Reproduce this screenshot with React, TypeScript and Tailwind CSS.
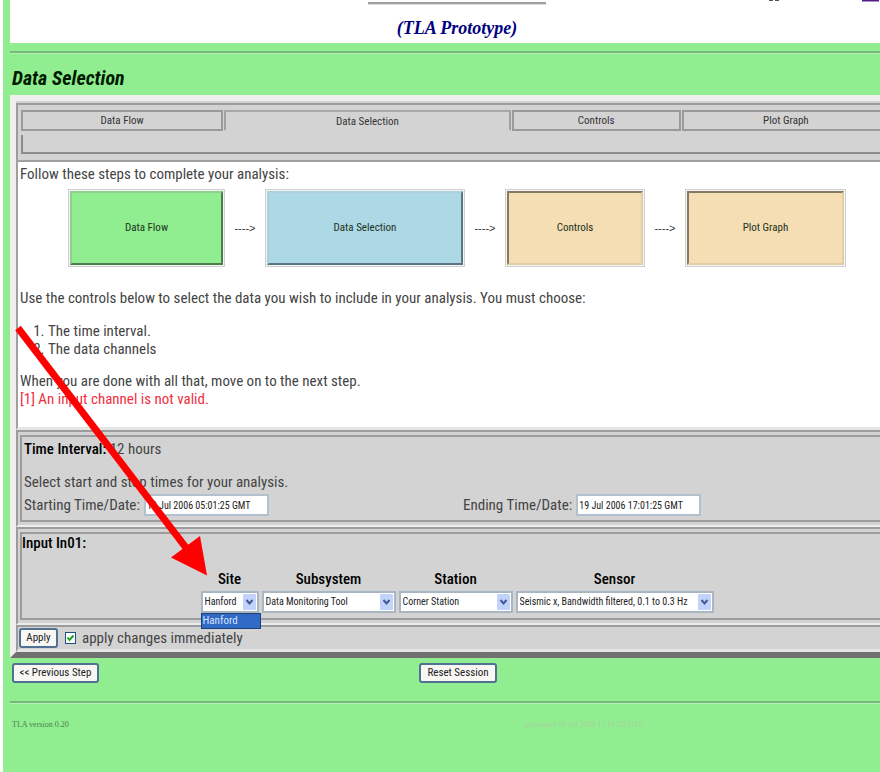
import React from "react";

const condensed = "font-['Roboto_Condensed',Roboto,sans-serif] whitespace-nowrap leading-[14px]";
const small = `${condensed} text-[11px]`;
const field = `${condensed} text-[10px]`;

const steps = [
  { name: "Data Flow", box: "w-[157px]", tone: "bg-[#90ee90] border-[#90cf90] border-r-[#4d7d4d] border-b-[#4d7d4d]" },
  { name: "Data Selection", box: "w-[200px]", tone: "bg-[#add8e6] border-[#add0dc] border-r-[#5a7681] border-b-[#5a7681]" },
  { name: "Controls", box: "w-[140px]", tone: "bg-[#f5deb3] border-[#e2cda7] border-t-[#857a66] border-l-[#857a66]" },
  { name: "Plot Graph", box: "w-[161px]", tone: "bg-[#f5deb3] border-[#e2cda7] border-t-[#857a66] border-l-[#857a66]" },
];

const fields = [
  { label: "Site", value: "Hanford", width: "w-[58px]", open: true },
  { label: "Subsystem", value: "Data Monitoring Tool", width: "w-[134px]", open: false },
  { label: "Station", value: "Corner Station", width: "w-[114px]", open: false },
  { label: "Sensor", value: "Seismic x, Bandwidth filtered, 0.1 to 0.3 Hz", width: "w-[198px]", open: false },
];

function Rule() {
  return <hr className="h-[3px] border-0 border-t-2 border-b border-t-[#79b879] border-b-[#b5f0b5]" />;
}

function Tab({ name, active = false }: { name: string; active?: boolean }) {
  return (
    <button
      type="button"
      role="tab"
      aria-selected={active}
      className={`${small} mr-px h-[21px] border-2 text-[#333] ${
        active ? "border-t-[#a8a8a8] border-x-[#a0a0a0] border-b-transparent pt-[2px]" : "border-[#9a9a9a]"
      }`}
    >
      {name}
    </button>
  );
}

function Cell({ children, className = "" }: { children: React.ReactNode; className?: string }) {
  return (
    <div className="border-2 border-t-[#9c9c9c] border-l-[#9c9c9c] border-r-[#ececec] border-b-[#ececec] px-[2px] py-[3px]">
      <div className={`border-2 border-[#9c9c9c] ${className}`}>{children}</div>
    </div>
  );
}

function PushButton({ children, className = "" }: { children: React.ReactNode; className?: string }) {
  return (
    <button type="button" className={`${small} h-[20px] rounded-[3px] border-2 border-[#4f7292] bg-[#f8f7f4] text-[#222] ${className}`}>
      {children}
    </button>
  );
}

function TimeField({ id, label, value }: { id: string; label: string; value: string }) {
  return (
    <div className="flex items-center gap-1">
      <label htmlFor={id}>{label}</label>
      <input id={id} defaultValue={value} className={`${field} h-[22px] w-[125px] border-2 border-[#b3c1cf] bg-white px-px text-[#222]`} />
    </div>
  );
}

function Arrow() {
  return (
    <svg className="pointer-events-none absolute top-[320px] left-[7px]" width="205" height="262" viewBox="10 320 205 262" aria-hidden="true">
      <path d="M18 328L187 549" stroke="#ff0000" strokeWidth="7" />
      <path d="M200 536L171 557.5L207 575.5Z" fill="#ff0000" />
    </svg>
  );
}

export default function App() {
  return (
    <div className="relative min-h-screen overflow-hidden border-l-[3px] border-white bg-[#90ee90] pl-[7px] font-['Roboto_Condensed',Roboto,sans-serif] text-[15px] leading-[18px] text-[#444]">
      <div className="w-[calc(100%+24px)]">
        <header className="relative flex h-[43px] flex-col items-center overflow-hidden bg-white">
          <div className="mt-[2px] h-[3px] w-[178px] border-t-2 border-b border-t-[#a0a0a0] border-b-[#ddd]" />
          <h2 className="mt-[10px] font-['Liberation_Serif',serif] text-[18px] leading-[26px] font-bold text-[#000080] italic">(TLA Prototype)</h2>
          <svg className="absolute top-0 right-[25px]" width="110" height="3" aria-hidden="true">
            <path d="M0 0.5h4M6 0.5h4" stroke="#555" />
            <path d="M93 0.5h17" stroke="#551a8b" strokeWidth="2" />
          </svg>
        </header>

        <div className="pt-[8px]">
          <Rule />
        </div>
        <h1 className="h-[41px] pt-[12px] pl-[2px] text-[20px] leading-[24px] font-bold text-[#001a00] italic">Data Selection</h1>

        <main className="border-[6px] border-t-[#efefef] border-r-[#707070] border-b-[#707070] border-l-[#efefef] bg-[#d3d3d3] pt-[2px]">
          <div className="border-t-2 border-l-2 border-[#9c9c9c] pt-[5px] pr-[7px] pb-[6px] pl-[3px]">
            <div role="tablist" className="grid grid-cols-[203fr_287fr_170fr_209fr]">
              <Tab name="Data Flow" />
              <Tab name="Data Selection" active />
              <Tab name="Controls" />
              <Tab name="Plot Graph" />
            </div>
            <div className="mt-[4px] h-[19px] border-b-2 border-l-2 border-[#8c8c8c]" />
          </div>

          <section className="border-2 border-b-[3px] border-t-[#a0a0a0] border-r-[#e5e5e5] border-b-[#e5e5e5] border-l-[#a0a0a0] bg-white px-[2px] pt-[3px] pb-[19px]">
            <p>Follow these steps to complete your analysis:</p>
            <div className="mt-[6px] ml-[48px] flex items-center">
              {steps.map((s, i) => (
                <React.Fragment key={s.name}>
                  {i > 0 && (
                    <span className="w-[40px] text-center font-['Liberation_Sans',sans-serif] text-[11px] leading-[14px] text-[#333]">----&gt;</span>
                  )}
                  <div className={`${s.box} h-[78px] border border-[#cfcfcf] bg-[#f4f4f4] p-px`}>
                    <button type="button" className={`${small} ${s.tone} h-full w-full border-2 text-[#1c3320]`}>
                      {s.name}
                    </button>
                  </div>
                </React.Fragment>
              ))}
            </div>
            <p className="mt-[22px]">Use the controls below to select the data you wish to include in your analysis. You must choose:</p>
            <ol className="mt-[15px] mb-[14px] list-decimal pl-[28px]">
              <li>The time interval.</li>
              <li>The data channels</li>
            </ol>
            <p>When you are done with all that, move on to the next step.</p>
            <p className="text-[#f03040]">[1] An input channel is not valid.</p>
          </section>

          <Cell className="px-[2px] pt-[3px] pb-[4px]">
            <p>
              <span className="font-medium text-black">Time Interval:</span> 12 hours
            </p>
            <p className="mt-[15px]">Select start and stop times for your analysis.</p>
            <div className="mt-[3px] grid grid-cols-2">
              <TimeField id="start" label="Starting Time/Date:" value="19 Jul 2006 05:01:25 GMT" />
              <div className="pl-[6px]">
                <TimeField id="end" label="Ending Time/Date:" value="19 Jul 2006 17:01:25 GMT" />
              </div>
            </div>
          </Cell>

          <Cell className="pb-[5px]">
            <p className="font-medium text-black">Input In01:</p>
            <div className="mt-[18px] flex justify-center gap-[3px]">
              {fields.map((f) => (
                <div key={f.label} className={`${f.width} relative`}>
                  <label htmlFor={f.label} className="block text-center font-medium text-black">
                    {f.label}
                  </label>
                  <div className="relative mt-[3px]">
                    <select id={f.label} className={`${field} h-[22px] w-full appearance-none border-2 border-[#a9b5c0] bg-white pl-[2px] text-[#222]`}>
                      <option>{f.value}</option>
                    </select>
                    <svg className="pointer-events-none absolute top-[3px] right-[3px]" width="13" height="16" aria-hidden="true">
                      <rect width="13" height="16" rx="1" fill="#c2d3fb" />
                      <path d="M3.5 6L6.5 9.5L9.5 6" fill="none" stroke="#3f5a92" strokeWidth="2" />
                    </svg>
                  </div>
                  {f.open && (
                    <div role="listbox" className="absolute top-full left-0 z-10 w-[60px] border border-[#20407a] bg-[#316ac5] pl-px text-[#d5e4ff]">
                      <div role="option" aria-selected="true" className={small}>
                        Hanford
                      </div>
                    </div>
                  )}
                </div>
              ))}
            </div>
          </Cell>

          <div className="flex h-[27px] items-center border-t-2 border-b-[3px] border-l-2 border-t-[#9c9c9c] border-b-[#e5e5e5] border-l-[#9c9c9c] pl-px">
            <PushButton className="w-[39px]">Apply</PushButton>
            <input id="auto" type="checkbox" defaultChecked className="peer sr-only" />
            <label htmlFor="auto" className="ml-[7px] flex items-center gap-[6px]">
              <svg width="11" height="12" aria-hidden="true">
                <rect x="0.5" y="0.5" width="10" height="11" fill="#fff" stroke="#1c5180" />
                <path d="M2.5 5.5L4.5 8L8.5 3.5" fill="none" stroke="#21a121" strokeWidth="2" />
              </svg>
              apply changes immediately
            </label>
          </div>
        </main>

        <div className="grid grid-cols-[1fr_auto_1fr] pt-[5px] pl-[2px]">
          <PushButton className="w-[87px]">&lt;&lt; Previous Step</PushButton>
          <PushButton className="w-[78px]">Reset Session</PushButton>
        </div>
        <div className="pt-[18px]">
          <Rule />
        </div>
        <footer className="grid grid-cols-[513px_1fr] pt-[15px] pl-[2px] font-['Liberation_Serif',serif] text-[8px] leading-[12px]">
          <span className="text-[#4d7d4d]">TLA version 0.20</span>
          <span className="text-[#a9cfa0]">generated 19 Jul 2006 17:01:25 UTC</span>
        </footer>
      </div>
      <Arrow />
    </div>
  );
}
